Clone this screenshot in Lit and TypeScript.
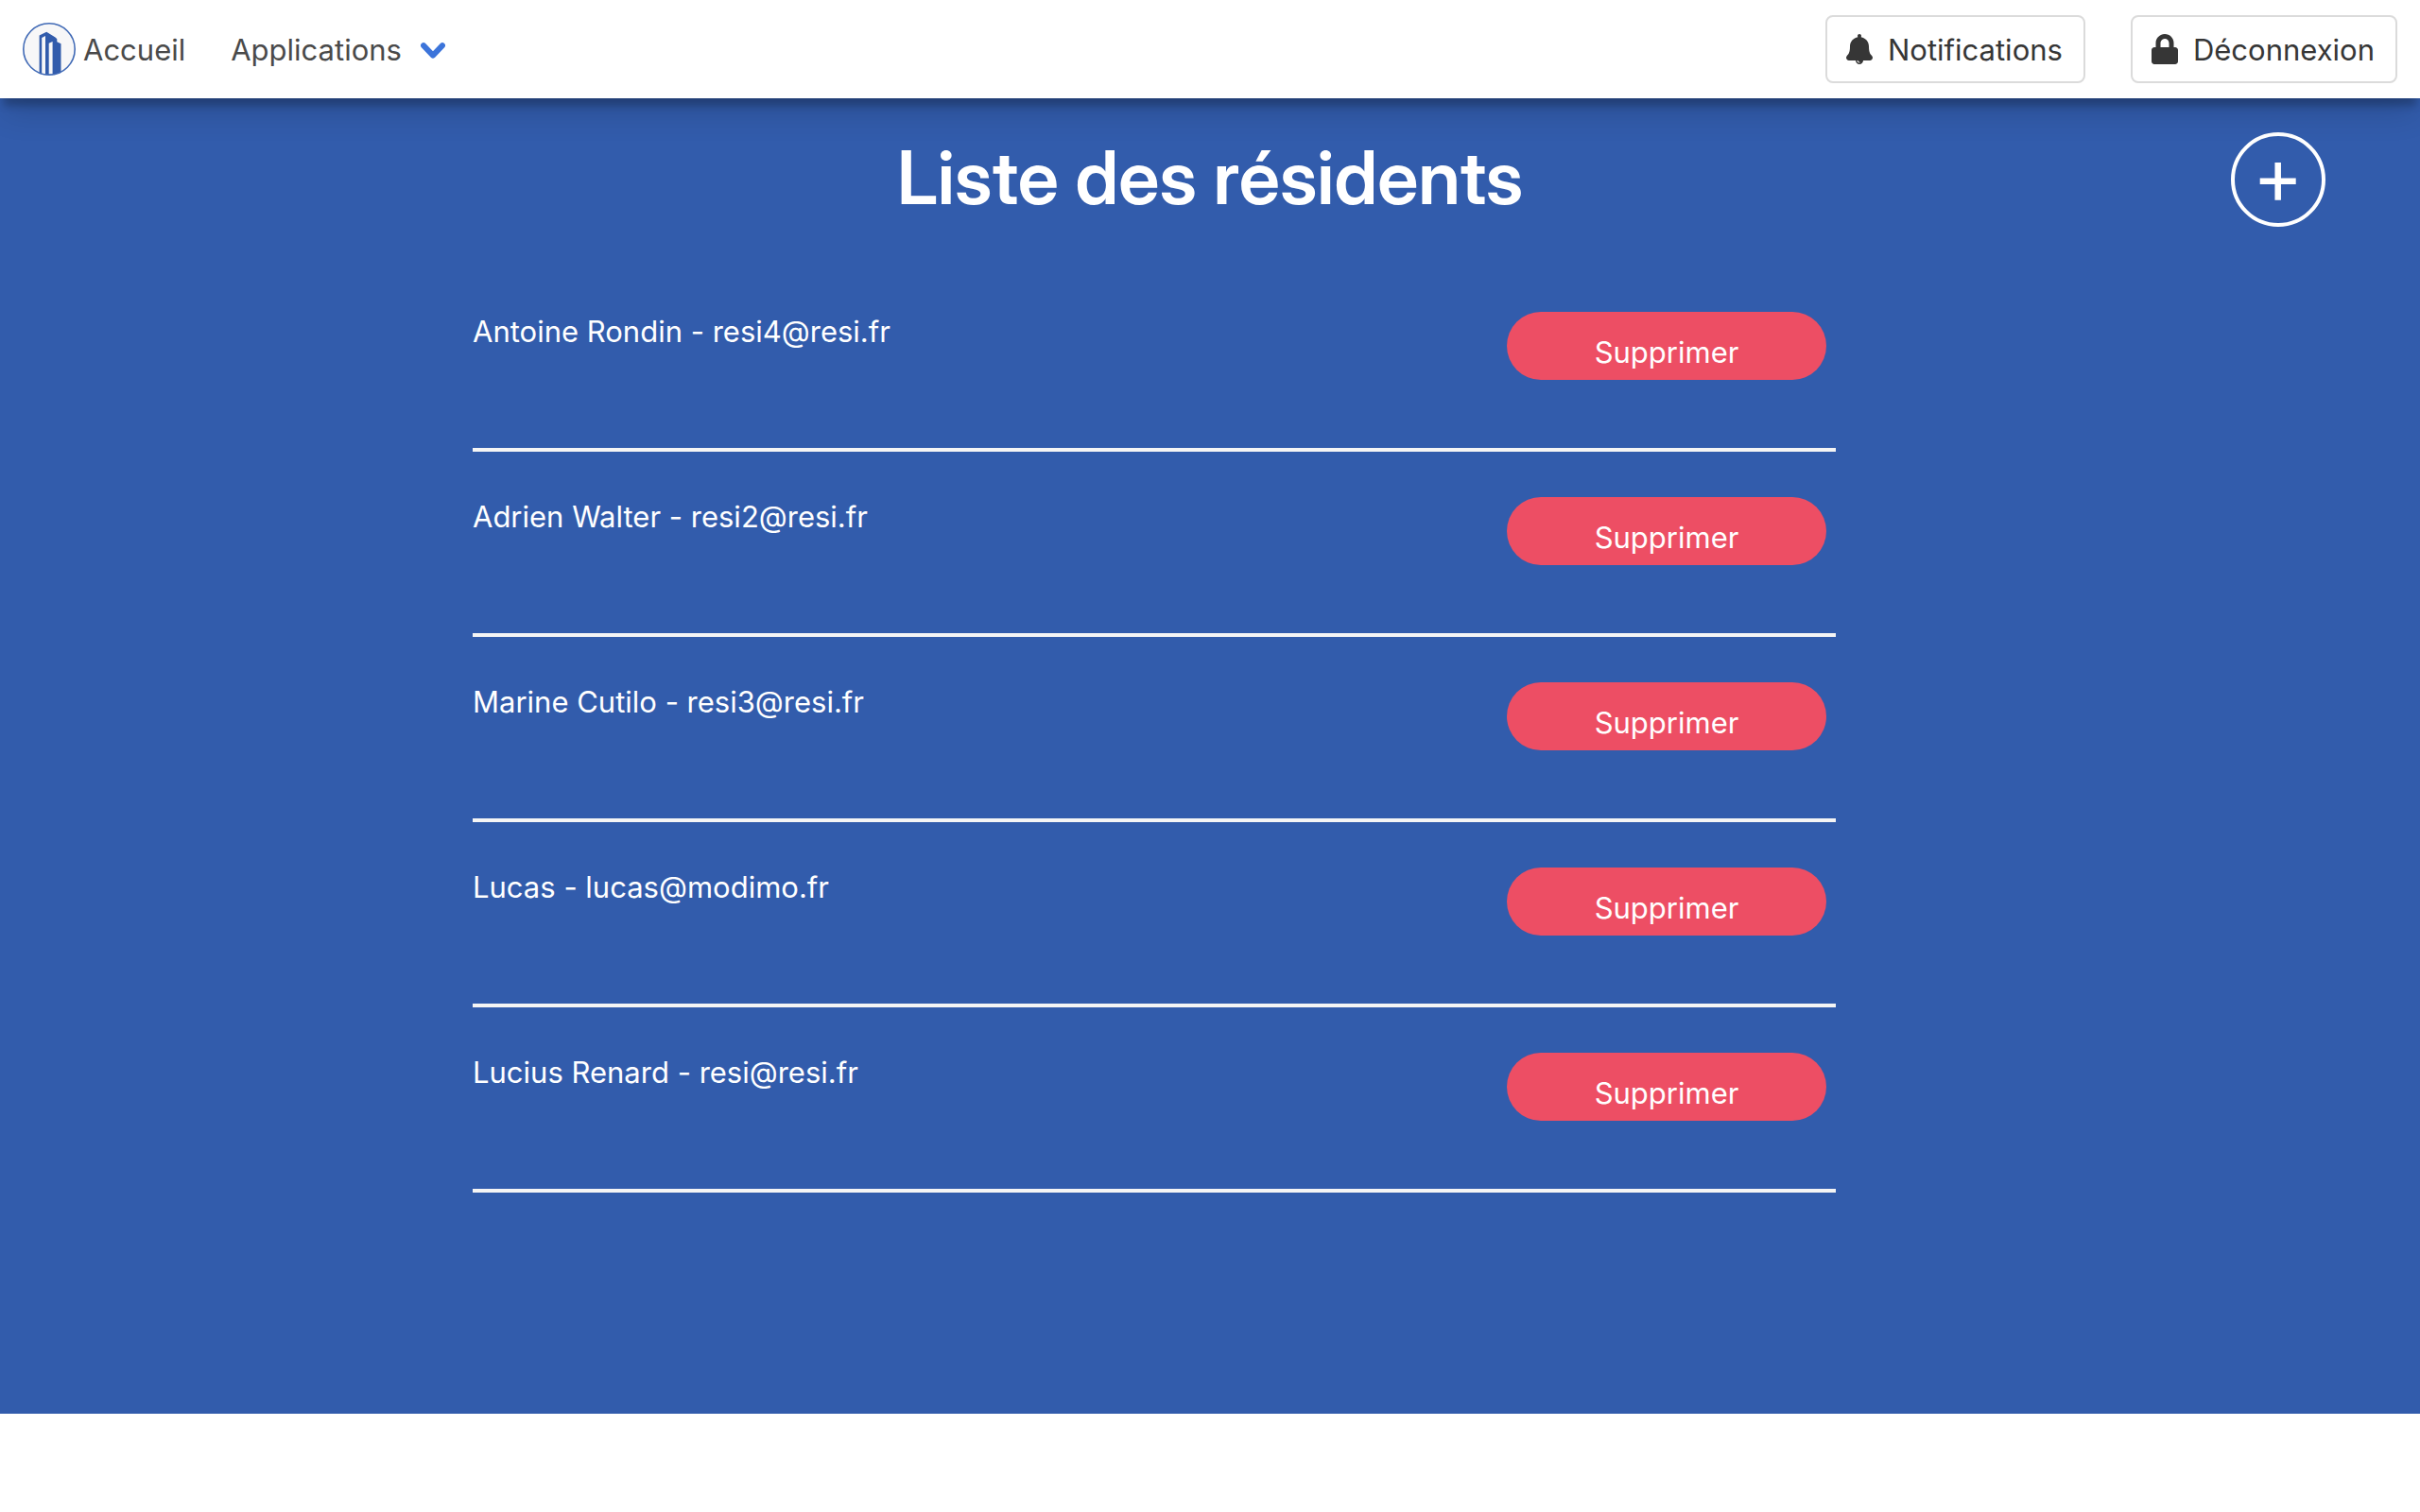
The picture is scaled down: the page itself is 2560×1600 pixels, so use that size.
import { LitElement, html, css, svg } from "lit";
import { customElement, property, state } from "lit/decorators.js";

interface Resident {
  name: string;
  email: string;
}

const logo = svg`
  <svg class="logo" viewBox="0 0 56 56" aria-hidden="true">
    <circle cx="28" cy="28" r="27" fill="#f7f7f8" />
    <path
      fill="#325cac"
      d="M17.6 54V13.600L25.200 9.700l9.300 5.800 1.800 1.800v2.900l4.200 2V53l-9 2.300H25z"
    />
    <path fill="#f7f7f8" d="M20.200 54V15.900l3.800-1.900v40.600z" />
    <path fill="#f7f7f8" d="M27.700 54.500V21.800l3.900-1.800v34.500z" />
    <circle cx="28" cy="28" r="27.200" fill="none" stroke="#426bb6" stroke-width="1.600" />
  </svg>`;

const bell = svg`
  <svg class="icon" viewBox="0 0 448 512" aria-hidden="true">
    <path
      fill="currentColor"
      d="M433.884 366.059C411.634 343.809 384 316.118 384 208c0-79.394-57.831-145.269-133.663-157.830A31.845 31.845 0 0 0 256 32c0-17.673-14.327-32-32-32s-32 14.327-32 32c0 6.750 2.095 13.008 5.663 18.170C121.831 62.731 64 128.606 64 208c0 108.118-27.643 135.809-49.893 158.059C-16.042 396.208 5.325 448 48.048 448H160c0 35.346 28.654 64 64 64s64-28.654 64-64h111.943c42.638 0 64.151-51.731 33.941-81.941zM224 472a8 8 0 0 1 0 16c-22.056 0-40-17.944-40-40h16c0 13.234 10.766 24 24 24z"
    />
  </svg>`;

const lock = svg`
  <svg class="icon" viewBox="0 0 448 512" aria-hidden="true">
    <path
      fill="currentColor"
      d="M400 224h-24v-72C376 68.2 307.8 0 224 0S72 68.2 72 152v72H48c-26.5 0-48 21.5-48 48v192c0 26.5 21.5 48 48 48h352c26.5 0 48-21.5 48-48V272c0-26.5-21.5-48-48-48zm-104 0H152v-72c0-39.7 32.3-72 72-72s72 32.3 72 72v72z"
    />
  </svg>`;

@customElement("site-navbar")
export class SiteNavbar extends LitElement {
  static styles = css`
    :host {
      display: block;
      position: relative;
      z-index: 1;
    }
    .bar {
      display: flex;
      align-items: center;
      justify-content: space-between;
      min-height: 104px;
      padding: 0 24px;
      box-sizing: border-box;
      background: #fff;
      box-shadow: 0 12px 8px -4px rgba(0, 0, 0, 0.22), 0 20px 32px -4px rgba(0, 0, 0, 0.14);
    }
    .group {
      display: flex;
      align-items: center;
      gap: 48px;
    }
    .link {
      display: flex;
      align-items: center;
      gap: 8px;
      padding: 0;
      border: 0;
      background: none;
      color: #4a4a4a;
      font: inherit;
      text-decoration: none;
      cursor: pointer;
    }
    .menu {
      gap: 20px;
    }
    .label {
      padding-top: 2px;
    }
    .logo {
      width: 56px;
      height: 56px;
    }
    .chevron {
      width: 26px;
      height: 18px;
      padding-top: 4px;
    }
    .button {
      display: flex;
      align-items: center;
      gap: 16px;
      height: 72px;
      padding: 0 22px 0 20px;
      box-sizing: border-box;
      border: 2px solid #dbdbdb;
      border-radius: 8px;
      background: #fff;
      color: #363636;
      font: inherit;
      cursor: pointer;
    }
    .icon {
      width: 28px;
      height: 32px;
    }
  `;

  render() {
    return html`
      <nav class="bar" aria-label="Navigation">
        <div class="group">
          <a class="link" href="#">${logo}<span class="label">Accueil</span></a>
          <button class="link menu" type="button" aria-haspopup="true">
            <span class="label">Applications</span>
            <svg class="chevron" viewBox="0 0 26 18" aria-hidden="true">
              <path
                d="M3 3.2 13 13.6 23 3.2"
                fill="none"
                stroke="#3c74da"
                stroke-width="6"
                stroke-linecap="round"
                stroke-linejoin="round"
              />
            </svg>
          </button>
        </div>
        <div class="group">
          <button class="button" type="button">
            ${bell}<span class="label">Notifications</span>
          </button>
          <button class="button" type="button">
            ${lock}<span class="label">Déconnexion</span>
          </button>
        </div>
      </nav>
    `;
  }
}

@customElement("resident-row")
export class ResidentRow extends LitElement {
  @property({ attribute: false }) resident!: Resident;

  static styles = css`
    :host {
      display: flex;
      align-items: flex-start;
      justify-content: space-between;
      min-height: 196px;
      padding: 48px 10px 0 0;
      box-sizing: border-box;
      border-bottom: 4px solid #f5f5f5;
    }
    .name {
      margin: 0;
      line-height: 42px;
    }
    .delete {
      width: 338px;
      height: 72px;
      padding: 14px 0 0;
      box-sizing: border-box;
      border: 0;
      border-radius: 36px;
      background: #ed4e64;
      color: #fff;
      font: inherit;
      cursor: pointer;
    }
  `;

  private remove() {
    this.dispatchEvent(new CustomEvent("remove", { detail: this.resident }));
  }

  render() {
    return html`
      <p class="name">${this.resident.name} - ${this.resident.email}</p>
      <button class="delete" type="button" @click=${this.remove}>Supprimer</button>
    `;
  }
}

@customElement("app-root")
export class AppRoot extends LitElement {
  @state() private residents: Resident[] = [
    { name: "Antoine Rondin", email: "resi4@resi.fr" },
    { name: "Adrien Walter", email: "resi2@resi.fr" },
    { name: "Marine Cutilo", email: "resi3@resi.fr" },
    { name: "Lucas", email: "lucas@modimo.fr" },
    { name: "Lucius Renard", email: "resi@resi.fr" },
  ];

  static styles = css`
    :host {
      display: block;
      background: #fff;
      font: 400 31px/48px Inter, "Liberation Sans", sans-serif;
    }
    .page {
      padding-bottom: 234px;
      background: #325cac;
      color: #fff;
    }
    .head {
      display: grid;
      grid-template-columns: 1fr auto 1fr;
      align-items: center;
      padding: 36px 100px 42px;
    }
    .title {
      grid-column: 2;
      margin: 0;
      padding-bottom: 4px;
      font-family: "Inter Display", Inter, "Liberation Sans", sans-serif;
      font-size: 78px;
      line-height: 96px;
      font-weight: 600;
    }
    .add {
      justify-self: end;
      display: flex;
      align-items: center;
      justify-content: center;
      width: 100px;
      height: 100px;
      padding: 0;
      border: 4px solid #fff;
      border-radius: 50%;
      background: none;
      cursor: pointer;
    }
    .plus {
      width: 40px;
      height: 40px;
      overflow: visible;
    }
    .columns {
      display: grid;
      grid-template-columns: 500fr 1442fr 618fr;
    }
    .list {
      grid-column: 2;
      margin: 0;
      padding: 0;
      list-style: none;
    }
  `;

  private remove(resident: Resident) {
    this.residents = this.residents.filter((r) => r !== resident);
  }

  render() {
    return html`
      <site-navbar></site-navbar>
      <main class="page">
        <header class="head">
          <h1 class="title">Liste des résidents</h1>
          <button class="add" type="button" aria-label="Ajouter">
            <svg class="plus" viewBox="0 0 40 40" aria-hidden="true">
              <path d="M19.700 2v39.700M.7 21.700h38" stroke="#fff" stroke-width="6.500" />
            </svg>
          </button>
        </header>
        <div class="columns">
          <ul class="list">
            ${this.residents.map(
              (r) => html`<li>
                <resident-row .resident=${r} @remove=${() => this.remove(r)}></resident-row>
              </li>`,
            )}
          </ul>
        </div>
      </main>
    `;
  }
}
